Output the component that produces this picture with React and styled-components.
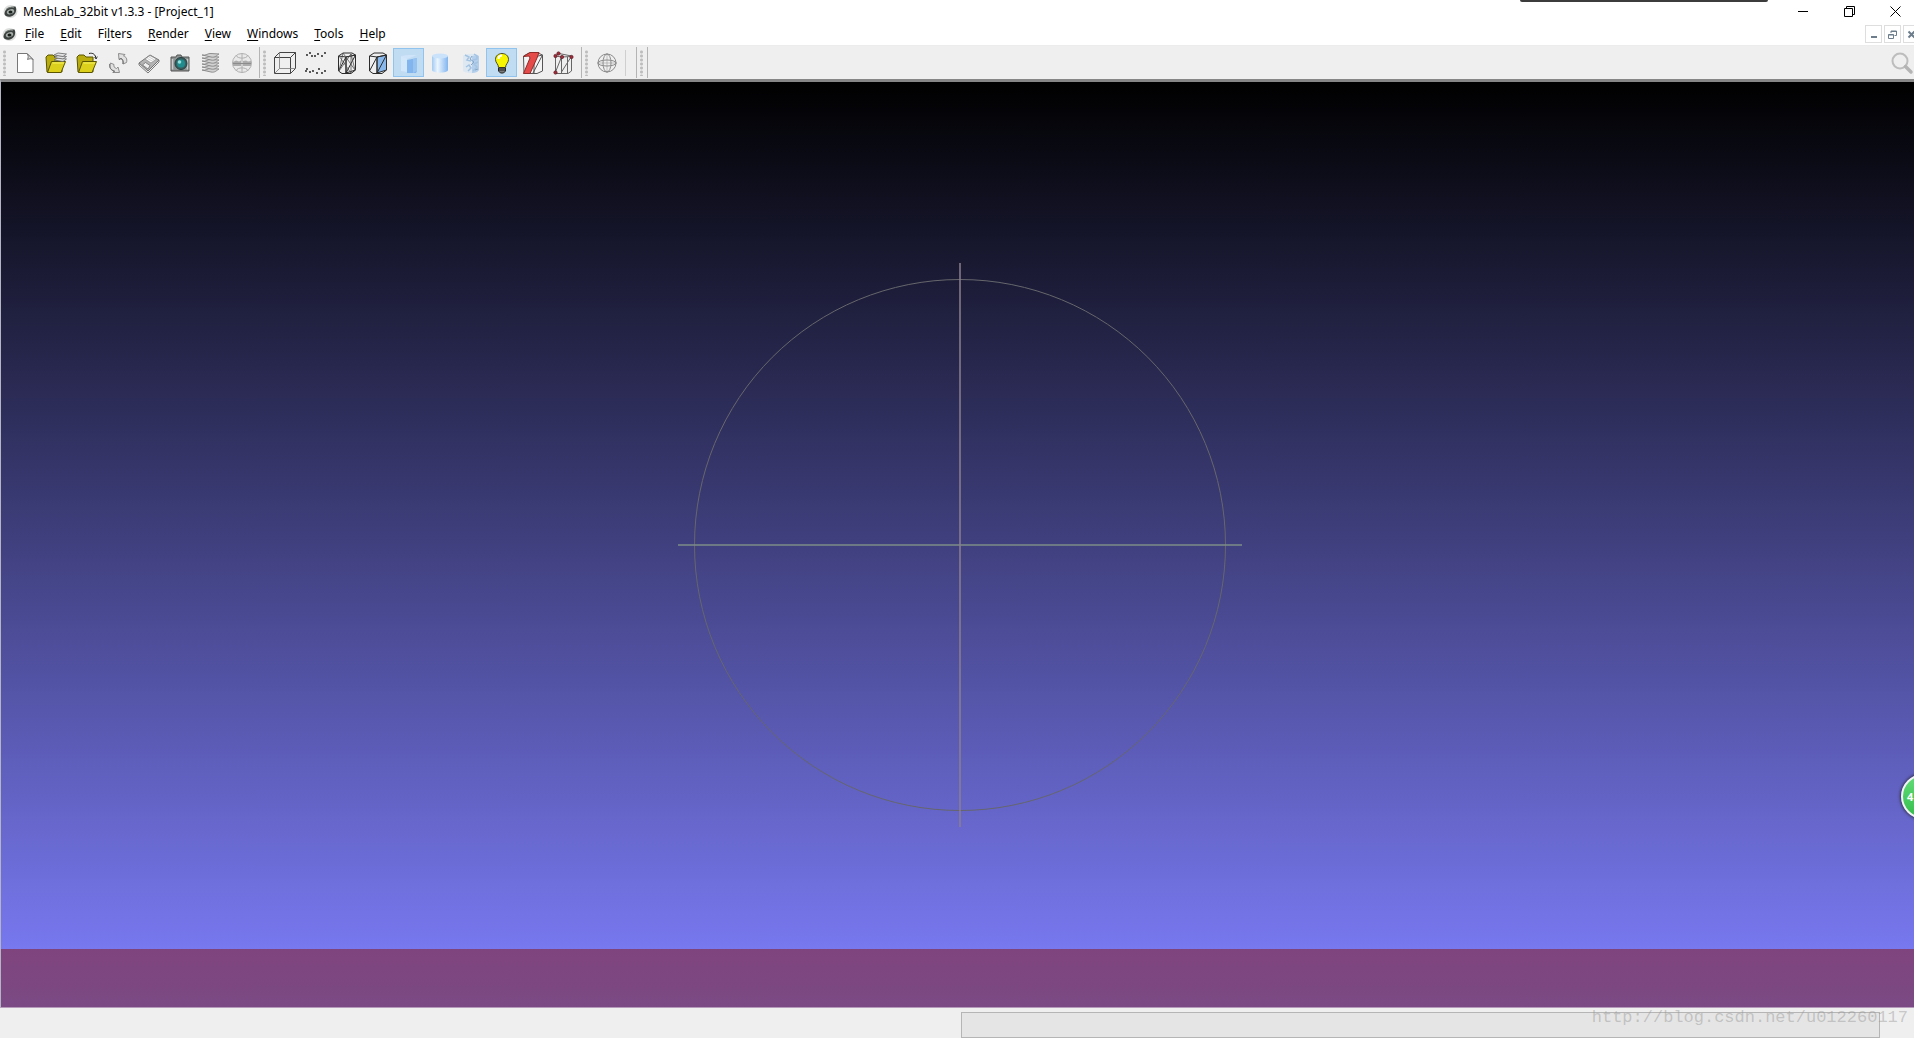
import React from "react";
import styled, { createGlobalStyle } from "styled-components";

const GlobalStyle = createGlobalStyle`
  *, *::before, *::after { box-sizing: border-box; }
  html, body, #root { height: 100%; }
  body {
    margin: 0;
    overflow: hidden;
    background: #fff;
    color: #000;
    font: 12px/16px "Noto Sans", "Noto Sans CJK SC", sans-serif;
  }
  button { font: inherit; color: inherit; }
`;

/* The maximised window hangs a few pixels over the right screen edge. */
const Window = styled.div`
  position: relative;
  display: flex;
  flex-direction: column;
  width: calc(100% + 6px);
  height: 100vh;
  overflow: hidden;
`;

const TitleBar = styled.header`
  display: flex;
  align-items: center;
  justify-content: space-between;
  height: 23px;
  padding-left: 3px;
`;

const Title = styled.h1`
  display: flex;
  align-items: center;
  gap: 5px;
  margin: 0;
  font-size: 12px;
  font-weight: 400;
  white-space: nowrap;
`;

const CaptionButtons = styled.div`
  display: flex;
  padding-right: 2px;
`;

const CaptionButton = styled.button`
  display: grid;
  place-items: center;
  width: 46px;
  height: 21px;
  padding: 0;
  border: 0;
  background: none;
`;

const DockedPanelEdge = styled.div`
  position: absolute;
  top: 0;
  right: 152px;
  width: 248px;
  height: 2px;
  border-radius: 0 0 2px 2px;
  background: #3c3c3c;
`;

const MenuBar = styled.nav`
  display: flex;
  align-items: center;
  height: 23px;
  padding-left: 2px;
  border-bottom: 1px solid #ececec;
`;

const MenuList = styled.div`
  display: flex;
  flex: 1;
  padding-left: 8px;
  gap: 16px;
`;

const MenuButton = styled.button`
  padding: 0;
  border: 0;
  background: none;
  line-height: 16px;
`;

const Mnemonic = styled.span`
  text-decoration: underline;
  text-underline-offset: 2px;
`;

const ChildButtons = styled.div`
  display: flex;
  gap: 2px;
`;

const ChildButton = styled.button`
  display: grid;
  place-items: center;
  width: 17px;
  height: 18px;
  padding: 0;
  border: 1px solid #dedede;
  background: #fff;
`;

const ToolBar = styled.div`
  display: flex;
  align-items: center;
  height: 33px;
  padding: 0 7px 0 3px;
  background: #efefef;
`;

const ToolGroup = styled.div`
  display: flex;
  align-items: center;
  height: 31px;
  padding-right: ${(p) => p.$end}px;
  border-right: 1px solid #b4b4b4;
  & + & { padding-left: 3px; }
`;

const Grip = styled.div`
  width: 3px;
  height: 26px;
  margin-right: 3px;
  background: radial-gradient(circle, #bdbdbd 1px, transparent 2px) 0 0 / 3px 4px;
`;

const ToolButton = styled.button`
  display: grid;
  place-items: center;
  width: 31px;
  height: 29px;
  padding: 0;
  border: 1px solid ${(p) => (p.$on ? "#90c4ee" : "transparent")};
  background: ${(p) => (p.$on ? "#bfdcf3" : "none")};
`;

const ToolDivider = styled.div`
  width: 1px;
  height: 26px;
  margin-left: 3px;
  background: #cfcfcf;
`;

const SearchButton = styled(ToolButton)`
  margin-left: auto;
  width: 24px;
`;

const Viewport = styled.main`
  position: relative;
  flex: 1;
  display: grid;
  place-items: center;
  border: 1px solid #b4b4c4;
  border-top: 3px solid #868686;
  border-bottom: 1px solid #b69abb;
  background: linear-gradient(#000, #8080ff);
`;

const Trackball = styled.svg`
  display: block;
  width: 564px;
  height: 564px;
`;

const LogBand = styled.div`
  position: absolute;
  inset: auto 0 0 0;
  height: 58px;
  background: linear-gradient(#7f447e, #7b4a84);
`;

const StatusBar = styled.footer`
  display: flex;
  height: 30px;
  padding: 4px 40px 0 50%;
  background: #efefef;
`;

const StatusField = styled.div`
  flex: 1;
  margin-left: 1px;
  border: 1px solid #b5b5b5;
  background: #e5e5e5;
`;

const Watermark = styled.a`
  position: absolute;
  right: 12px;
  bottom: 9px;
  color: rgba(150, 150, 150, 0.45);
  font: 17px/22px "Liberation Mono", monospace;
  text-decoration: none;
`;

const FloatingBall = styled.button`
  position: absolute;
  right: -26px;
  bottom: 219px;
  width: 45px;
  height: 45px;
  padding: 0 0 0 4px;
  border: 2px solid #f2f4f6;
  border-radius: 50%;
  background: linear-gradient(#62dc78, #35bd4c);
  box-shadow: 0 0 3px 1px #34344c;
  color: #fff;
  font-size: 11px;
  font-weight: 700;
  text-align: left;
`;

const Icon = ({ size = 24, children, ...rest }) => (
  <svg width={size} height={size} viewBox={`0 0 ${size} ${size}`} fill="none" aria-hidden="true" {...rest}>
    {children}
  </svg>
);

const Logo = () => (
  <Icon size={15}>
    <ellipse cx="7.5" cy="7.5" rx="7" ry="6.5" fill="#dddfdd" />
    <path d="M1.500 10C1.500 5 6 2 12.500 2.500C14 6 13 11 8 12.500C5 13.200 2 12.500 1.500 10Z" fill="#3c4240" />
    <ellipse cx="7.500" cy="7.800" rx="3.800" ry="2.400" fill="#a8aea9" transform="rotate(-20 7.5 7.8)" />
    <ellipse cx="7.500" cy="8" rx="2" ry="1.500" fill="#18201c" />
    <path d="M3 5.500C5 3.500 8 3 11 3.500" stroke="#777e7a" />
  </Icon>
);

const NewFile = () => (
  <Icon>
    <path d="M4.500 2.500H14L20 8.500V21.500H4.500Z" fill="#fff" stroke="#777" />
    <path d="M14 2.500C15.500 4.500 15.500 6.500 14.500 8.500C16.500 7.500 18.500 7.500 20 8.500Z" fill="#e2e2e2" stroke="#777" />
  </Icon>
);

const Folder = ({ children }) => (
  <Icon>
    <path d="M2 6L4 4H9L11 6H18V21H3Z" fill="#b9ac0e" stroke="#5b5500" />
    <path d="M3.500 21.500L7.500 10.500H21.500L17 21.500Z" fill="#dcd01c" stroke="#5b5500" />
    <path d="M8.500 12H20" stroke="#f6f069" />
    {children}
  </Icon>
);

const OpenProject = () => (
  <Folder>
    {[9, 6.500, 4].map((y) => (
      <path key={y} d={`M10 ${y}L14 ${y - 2}L22.500 ${y - 1}L19 ${y + 1.500}Z`} fill="#e4e4e4" stroke="#666" strokeWidth=".8" />
    ))}
  </Folder>
);

const ImportMesh = () => (
  <Folder>
    <path d="M14 2.500C18 1.500 20.500 3.500 21 7.500" stroke="#222" />
    <path d="M19.500 6L21.200 8L22.300 5.500" stroke="#222" strokeWidth=".8" />
  </Folder>
);

const Reload = () => (
  <Icon>
    <path d="M12.500 2.500L13 8.500L15 7.500C16.500 8 17.500 10 17 13L20.500 11.500C21.500 8 20 5.500 17.500 5L19 3.500Z" fill="#e0e0e0" stroke="#8c8c8c" />
    <path d="M13 8.500L15 7.500C16.500 8 17.500 10 17 13" stroke="#6f6f6f" />
    <path d="M4.500 12L8 13.500C7.500 15.500 8.500 17 10.500 17.500L12 16L13.500 21.500L7 21.500L8.500 20C5 19.500 3 16.500 4.500 12Z" fill="#e0e0e0" stroke="#8c8c8c" />
    <path d="M3.800 13C3 16.500 5 19.500 8.500 20L7 21.500" stroke="#6f6f6f" />
  </Icon>
);

const Save = () => (
  <Icon>
    <path d="M2 12L13 4L22 9L11 20Z" fill="#b4b4b4" stroke="#747474" />
    <path d="M8 8L13 4.500L19.500 8L14 12Z" fill="#fafafa" stroke="#888" strokeWidth=".7" />
    <path d="M5.500 14L8.500 11.500L13 14.500L11 18Z" fill="#efefef" stroke="#666" strokeWidth=".7" />
    <path d="M2 12V14L11 22L22 11V9" stroke="#7c7c7c" />
    <path d="M10.500 7.500L16 10.500M12 6L17.500 9" stroke="#bbb" strokeWidth=".7" />
  </Icon>
);

const Snapshot = () => (
  <Icon>
    <path d="M3 6H8L9 4H13L14 6H21V20H3Z" fill="#8d9292" stroke="#555" />
    <path d="M4.500 8V18.500M19.500 8V18.500" stroke="#c9cccc" strokeWidth="1.500" />
    <circle cx="13" cy="12.500" r="6" fill="#385f60" stroke="#253f40" />
    <circle cx="13" cy="12.500" r="4" fill="#208c8d" />
    <circle cx="11.500" cy="11" r="1.800" fill="#94dedd" />
  </Icon>
);

const Layers = () => (
  <Icon>
    {[20, 17, 14, 11, 8, 5].map((y) => (
      <path key={y} d={`M3 ${y - 1}C7 ${y} 9 ${y - 3} 12 ${y - 2.500}L20 ${y - 2}C18 ${y - 1} 16 ${y + 2} 12 ${y + 1}Z`} fill="#d2d2d2" stroke="#848484" strokeWidth=".9" />
    ))}
  </Icon>
);

const RasterMode = () => (
  <Icon>
    <circle cx="12" cy="12" r="9.500" fill="#e9e9e9" stroke="#b0b0b0" />
    <path d="M12 2.500V21.500M6 4.500C8 8 16 8 18 4.500M6 19.500C8 16 16 16 18 19.500" stroke="#b0b0b0" />
    <path d="M3 11L6 9.500L9 10.500L11 9.500V15H3ZM13 10L16 9.500L18 10.500L21 10V15H13Z" fill="#acacac" />
    <path d="M3 12.500H21" stroke="#8c8c8c" />
  </Icon>
);

const BoundingBox = () => (
  <Icon>
    <path d="M1.500 6.500L6.500 1.500H22.500L17.500 6.500ZM1.500 6.500V22.500H17.500V6.500M17.500 22.500L22.500 17.500V1.500" stroke="#444" />
    <path d="M6.500 1.500V17.500H22.500M6.500 17.500L1.500 22.500" stroke="#777" strokeWidth=".8" />
  </Icon>
);

const Points = () => (
  <Icon>
    {[[3, 4], [6, 2], [11, 5], [14, 3], [18, 5], [21, 2], [8, 5], [3, 18], [6, 21], [9, 20], [13, 22], [15, 18], [18, 22], [21, 20], [2, 20]].map(([x, y]) => (
      <circle key={`${x}-${y}`} cx={x} cy={y} r=".9" fill="#111" />
    ))}
  </Icon>
);

const Prism = ({ side = "none", children }) => (
  <g stroke="#2c2c2c">
    <path d="M3.500 5L8 2H17L20.500 4V19L16 22.500H7L3.500 20Z" />
    <path d="M11 6L20.500 4V19L11 22Z" fill={side} />
    <path d="M3.500 5L11 6L20.500 4M11 6V22M3.500 20L11 6M11 22L20.500 4" />
    {children}
  </g>
);

const Wireframe = () => (
  <Icon>
    <Prism>
      <path d="M8 2L4 20L16 3L20 19L8 2M16 3V22M4 5L16 22" stroke="#555" strokeWidth=".8" />
    </Prism>
  </Icon>
);

const HiddenLines = () => (
  <Icon><Prism side="#89b9ec" /></Icon>
);

const FlatShading = () => (
  <Icon>
    <path d="M4 5L10 7V21L4 20Z" fill="#d3e7fa" />
    <path d="M4 5L11 4H20L10 8Z" fill="#cfe4f9" />
    <path d="M10 9L20 7V20L19 22H10Z" fill="#82b5ee" />
    <path d="M16 8L20 7V20L16 22Z" fill="#98c3f1" />
  </Icon>
);

const SmoothShading = () => (
  <Icon>
    <defs>
      <linearGradient id="cylinder">
        <stop stopColor="#a3caf2" />
        <stop offset=".35" stopColor="#ebf5fe" />
        <stop offset="1" stopColor="#82b5ee" />
      </linearGradient>
    </defs>
    <path d="M4 5V19C4 22.500 20 22.500 20 19V5Z" fill="url(#cylinder)" />
    <ellipse cx="12" cy="5" rx="8" ry="2.500" fill="#cae2fa" />
  </Icon>
);

const Texture = () => (
  <Icon>
    <path d="M4 5C7 2 17 2 20 5V19C18 23 8 23 4 20Z" fill="#dde8f3" />
    <path d="M13 5C16 4 18 4 20 5V19C19 21 16 22 13 22Z" fill="#b3cfec" />
    <path d="M6 4L10 6L8 9L12 10M15 3L18 5V8L14 9M7 16L10 14L12 17L9 20M19 11L15 13L18 16L14 20" stroke="#a4c3e2" strokeWidth="1.500" />
    <path d="M13 5L11 8L15 11L12 14M19 18L16 19" stroke="#86a6c8" />
  </Icon>
);

const Bulb = () => (
  <Icon>
    <path d="M8.500 16.500C8.500 13 5.500 12 5.500 8.500C5.500 0.500 18.500 0.500 18.500 8.500C18.500 12 15.500 13 15.500 16.500Z" fill="#f8f500" stroke="#4b4b20" />
    <path d="M8.500 8C8.500 5.500 10 4.500 12 4.500" stroke="#fff" strokeWidth="2" />
    <path d="M8.500 17H15.500V20L13.500 22H10.500L8.500 20Z" fill="#7c7c7c" stroke="#222" />
    <path d="M8.500 19H15.500" stroke="#222" />
  </Icon>
);

const BackFace = () => (
  <Icon>
    <path d="M2.500 5L8 2H17L21.500 4V20L16 22.500H3L2.500 5ZM13 6L21.500 4M13 6V22M21.500 4L12 22" fill="#f4f4f4" stroke="#555" />
    <path d="M2.500 5.500L9 1.500H18L16 7L9 22.500H2.500L9 7L8 5Z" fill="#e54b48" stroke="#902b29" />
  </Icon>
);

const VertexEdges = () => (
  <Icon>
    <path d="M3.500 5L7 2.500L19.500 5V20L16 22.500H3.500ZM3.500 5L9.500 6L19.500 5.500M9.500 6V22M15.500 6V22M3.500 21L9.500 6M9.500 21L19 6" stroke="#666" />
    {[[3.500, 5], [6.500, 2.500], [10, 6], [19.500, 6], [3.500, 21.500]].map(([x, y]) => (
      <circle key={`${x}-${y}`} cx={x} cy={y} r="1.700" fill="#a32b38" stroke="#511b23" strokeWidth=".6" />
    ))}
  </Icon>
);

const TrackballIcon = () => (
  <Icon>
    <g stroke="#8c8c8c">
      <circle cx="12" cy="12" r="9" />
      <ellipse cx="12" cy="12" rx="4" ry="9" />
      <ellipse cx="12" cy="12" rx="9" ry="3" />
      <path d="M12 2V22M2 12H22" strokeWidth=".5" />
    </g>
  </Icon>
);

const Magnifier = () => (
  <Icon>
    <circle cx="10" cy="10" r="7.500" stroke="#bdbdbd" strokeWidth="2" />
    <path d="M15.500 15.500L21 21" stroke="#b4b4b4" strokeWidth="3.500" strokeLinecap="round" />
  </Icon>
);

const menus = [
  ["", "F", "ile"],
  ["", "E", "dit"],
  ["Fi", "l", "ters"],
  ["", "R", "ender"],
  ["", "V", "iew"],
  ["", "W", "indows"],
  ["", "T", "ools"],
  ["", "H", "elp"],
];

const fileTools = [
  ["New empty project", NewFile],
  ["Open project", OpenProject],
  ["Import mesh", ImportMesh],
  ["Reload", Reload],
  ["Export mesh", Save],
  ["Save snapshot", Snapshot],
  ["Show layer dialog", Layers],
  ["Show raster mode", RasterMode],
];

const renderTools = [
  ["Bounding box", BoundingBox],
  ["Points", Points],
  ["Wireframe", Wireframe],
  ["Hidden lines", HiddenLines],
  ["Flat", FlatShading, true],
  ["Smooth", SmoothShading],
  ["Texture", Texture],
  ["Light on/off", Bulb, true],
  ["Back-face culling", BackFace],
  ["Selected vertices", VertexEdges],
];

const Tools = ({ items }) =>
  items.map(([label, Glyph, on]) => (
    <ToolButton key={label} aria-label={label} aria-pressed={!!on} $on={on}>
      <Glyph />
    </ToolButton>
  ));

export default function App() {
  return (
    <>
      <GlobalStyle />
      <Window>
        <TitleBar>
          <Title><Logo />MeshLab_32bit v1.3.3 - [Project_1]</Title>
          <CaptionButtons>
            <CaptionButton aria-label="Minimize">
              <Icon size={11}><path d="M0 5.500H10" stroke="#000" /></Icon>
            </CaptionButton>
            <CaptionButton aria-label="Restore">
              <Icon size={11}><path d="M.5 2.500H8.500V10.500H.5ZM2.500 2.500V.5H10.500V8.500H8.500" stroke="#000" /></Icon>
            </CaptionButton>
            <CaptionButton aria-label="Close">
              <Icon size={11}><path d="M.5 .5L10.500 10.500M10.500 .5L.5 10.500" stroke="#000" /></Icon>
            </CaptionButton>
          </CaptionButtons>
        </TitleBar>
        <DockedPanelEdge />
        <MenuBar>
          <Logo />
          <MenuList>
            {menus.map(([before, key, after]) => (
              <MenuButton key={before + key + after}>
                {before}<Mnemonic>{key}</Mnemonic>{after}
              </MenuButton>
            ))}
          </MenuList>
          <ChildButtons>
            <ChildButton aria-label="Minimize project">
              <Icon size={9}><path d="M2 7H8" stroke="#6d7d8c" strokeWidth="2" /></Icon>
            </ChildButton>
            <ChildButton aria-label="Restore project">
              <Icon size={9}><path d="M.5 4.500H5.500V8.500H.5ZM.5 5H5.500M3 3V1H8.500V5.500H6.500M3 1.500H8.500" stroke="#6d7d8c" /></Icon>
            </ChildButton>
            <ChildButton aria-label="Close project">
              <Icon size={9}><path d="M1.500 1.500L7.500 7.500M7.500 1.500L1.500 7.500" stroke="#6d7d8c" strokeWidth="2" /></Icon>
            </ChildButton>
          </ChildButtons>
        </MenuBar>
        <ToolBar>
          <ToolGroup $end={2}><Grip /><Tools items={fileTools} /></ToolGroup>
          <ToolGroup $end={2}><Grip /><Tools items={renderTools} /></ToolGroup>
          <ToolGroup $end={10}>
            <Grip /><Tools items={[["Show trackball", TrackballIcon]]} /><ToolDivider />
          </ToolGroup>
          <ToolGroup $end={1}><Grip /></ToolGroup>
          <SearchButton aria-label="Search"><Magnifier /></SearchButton>
        </ToolBar>
        <Viewport>
          <Trackball viewBox="0 0 564 564" aria-label="Trackball">
            <circle cx="282" cy="282" r="265.500" fill="none" stroke="#66666c" strokeWidth="1" />
            <path d="M0 282H564" stroke="#7d8c86" strokeWidth="1.500" />
            <path d="M282 0V564" stroke="#8c7f8c" strokeWidth="1.500" />
          </Trackball>
          <LogBand />
        </Viewport>
        <StatusBar><StatusField role="status" /></StatusBar>
        <Watermark href="http://blog.csdn.net/u012260117">http://blog.csdn.net/u012260117</Watermark>
        <FloatingBall>4</FloatingBall>
      </Window>
    </>
  );
}
